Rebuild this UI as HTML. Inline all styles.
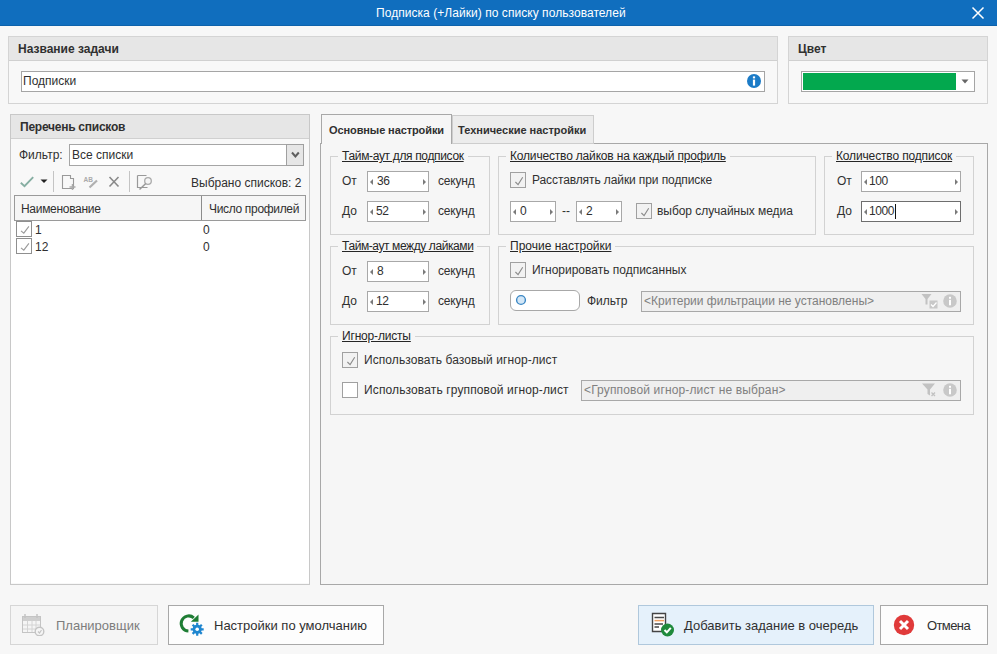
<!DOCTYPE html>
<html><head><meta charset="utf-8">
<style>
*{box-sizing:border-box;margin:0;padding:0}
html,body{width:997px;height:654px;overflow:hidden;background:#f7f7f7;font-family:"Liberation Sans",sans-serif;font-size:12px;color:#303030}
.a{position:absolute}
.t{position:absolute;line-height:14px;white-space:nowrap}
.b{font-weight:bold}
.panel{position:absolute;border:1px solid #d4d4d4;background:#f8f8f8}
.ph{position:absolute;left:0;right:0;top:0;height:24px;background:#e6e6e6;border-bottom:1px solid #d0d0d0}
.inp{position:absolute;background:#fff;border:1px solid #a5a5a5}
.grp{position:absolute;border:1px solid #d2d2d2}
.gt{position:absolute;line-height:14px;white-space:nowrap;background:#f6f6f6;padding:0 4px;text-decoration:underline;color:#262626}
.spin{position:absolute;background:#fff;border:1px solid #a8a8a8;height:21px}
.spin .l{position:absolute;left:2px;top:7px;width:0;height:0;border-top:3px solid transparent;border-bottom:3px solid transparent;border-right:3px solid #7a7a7a}
.spin .r{position:absolute;right:2px;top:7px;width:0;height:0;border-top:3px solid transparent;border-bottom:3px solid transparent;border-left:3px solid #7a7a7a}
.spin .v{position:absolute;left:9px;top:2px;line-height:14px;letter-spacing:-0.4px}
.cb{position:absolute;width:16px;height:16px;border:1px solid #a0a0a0;background:#f2f2f2}
.cb svg{position:absolute;left:0;top:0}
.btn{position:absolute;border:1px solid #adadad;background:#fdfdfd;height:40px}
.bt{position:absolute;line-height:14px;white-space:nowrap;font-size:13px}
</style></head>
<body>
<!-- title bar -->
<div class="a" style="left:0;top:0;width:997px;height:26px;background:#106ebe;border-bottom:1px solid #0d62ab"></div>
<div class="t" style="left:376px;top:6px;color:#fff;letter-spacing:0.05px">Подписка (+Лайки) по списку пользователей</div>
<svg class="a" style="left:971px;top:6px" width="14" height="14" viewBox="0 0 14 14"><path d="M1.5 1.5L12.5 12.5M12.5 1.5L1.5 12.5" stroke="#fff" stroke-width="1.5"/></svg>

<!-- panel name -->
<div class="panel" style="left:8px;top:36px;width:770px;height:68px"><div class="ph"></div></div>
<div class="t b" style="left:18px;top:42px">Название задачи</div>
<div class="inp" style="left:21px;top:71px;width:744px;height:21px"></div>
<div class="t" style="left:23px;top:74px">Подписки</div>
<svg class="a" style="left:746px;top:73px" width="16" height="16" viewBox="0 0 16 16"><circle cx="8" cy="8" r="7" fill="#1b7bc7"/><rect x="6.9" y="3.4" width="2.2" height="2" fill="#fff"/><rect x="6.9" y="6.6" width="2.2" height="6" fill="#fff"/></svg>

<!-- panel color -->
<div class="panel" style="left:788px;top:36px;width:200px;height:68px"><div class="ph"></div></div>
<div class="t b" style="left:798px;top:42px">Цвет</div>
<div class="inp" style="left:801px;top:71px;width:174px;height:21px"></div>
<div class="a" style="left:803px;top:73px;width:153px;height:17px;background:#03a84e"></div>
<svg class="a" style="left:961px;top:79px" width="8" height="5" viewBox="0 0 8 5"><path d="M0.5 0.5H7.5L4 4.5Z" fill="#666"/></svg>

<!-- panel lists -->
<div class="panel" style="left:10px;top:114px;width:300px;height:471px;border-color:#c8c8c8"><div class="ph"></div></div>
<div class="t b" style="left:20px;top:120px;letter-spacing:-0.25px">Перечень списков</div>
<div class="t" style="left:19px;top:148px">Фильтр:</div>
<div class="inp" style="left:69px;top:144px;width:235px;height:22px"></div>
<div class="a" style="left:286px;top:144px;width:18px;height:22px;background:#e6e6e6;border:1px solid #a0a0a0"></div>
<svg class="a" style="left:290px;top:150px" width="10" height="9" viewBox="0 0 10 9"><path d="M2 2.5L5.4 6.4L8.8 2.5" fill="none" stroke="#5e5e5e" stroke-width="2"/></svg>
<div class="t" style="left:72px;top:148px">Все списки</div>

<!-- toolbar -->
<svg class="a" style="left:18px;top:174px" width="18" height="15" viewBox="0 0 18 15"><path d="M2.8 8.8L6.5 12.2L15.2 3.2" fill="none" stroke="#86aea2" stroke-width="1.9"/></svg>
<svg class="a" style="left:40px;top:179px" width="8" height="5" viewBox="0 0 8 5"><path d="M0.5 0.5H7.5L4 4Z" fill="#222"/></svg>
<div class="a" style="left:53px;top:171px;width:1px;height:21px;background:#c4c4c4"></div>
<svg class="a" style="left:60px;top:173px" width="18" height="18" viewBox="0 0 18 18"><path d="M2.5 2.5H10.5V5.5H13.5V15.5H2.5Z" fill="none" stroke="#999" stroke-width="1.1"/><path d="M12.5 11V17M9.5 14H15.5" stroke="#aaa" stroke-width="1.5"/></svg>
<svg class="a" style="left:82px;top:174px" width="18" height="16" viewBox="0 0 18 16"><text x="1.5" y="7.5" font-family="Liberation Sans" font-size="6.5" font-weight="bold" fill="#aaa">AB</text><path d="M7.5 13.5L15 6.5" stroke="#b0b0b0" stroke-width="2.2"/></svg>
<svg class="a" style="left:107px;top:175px" width="14" height="14" viewBox="0 0 14 14"><path d="M2.5 2L11.5 11.5M11.5 2L2.5 11.5" stroke="#8a8a8a" stroke-width="1.6"/></svg>
<div class="a" style="left:129px;top:171px;width:1px;height:21px;background:#c4c4c4"></div>
<svg class="a" style="left:135px;top:173px" width="18" height="18" viewBox="0 0 18 18"><path d="M2.5 2.5H11.5M2.5 2.5V14.5H12.5" fill="none" stroke="#999" stroke-width="1.2"/><circle cx="13" cy="8" r="3.3" fill="#f5f5f5" stroke="#aaa" stroke-width="1.3"/><path d="M10.8 10.5L4.5 16.5" stroke="#999" stroke-width="1.5"/></svg>
<div class="t" style="left:191px;top:176px">Выбрано списков: 2</div>

<!-- grid -->
<div class="a" style="left:11px;top:220px;width:298px;height:363px;background:#fff"></div>
<div class="a" style="left:14px;top:195px;width:292px;height:26px;border:1px solid #9a9a9a;background:#f6f6f6"></div>
<div class="a" style="left:201px;top:196px;width:1px;height:24px;background:#8c8c8c"></div>
<div class="t" style="left:21px;top:202px;letter-spacing:-0.3px">Наименование</div>
<div class="t" style="left:209px;top:202px;letter-spacing:-0.33px">Число профилей</div>
<div class="cb" style="left:16px;top:221px;background:#fff;border-color:#8f8f8f"><svg width="16" height="16" viewBox="0 0 16 16"><path d="M4 8.8L6.8 11.2L11.9 4.3" fill="none" stroke="#9a9a9a" stroke-width="1.1"/></svg></div>
<div class="cb" style="left:16px;top:238px;background:#fff;border-color:#8f8f8f"><svg width="16" height="16" viewBox="0 0 16 16"><path d="M4 8.8L6.8 11.2L11.9 4.3" fill="none" stroke="#9a9a9a" stroke-width="1.1"/></svg></div>
<div class="t" style="left:35px;top:223px">1</div>
<div class="t" style="left:35px;top:240px">12</div>
<div class="t" style="left:203px;top:223px">0</div>
<div class="t" style="left:203px;top:240px">0</div>

<!-- tabs -->
<div class="a" style="left:320px;top:143px;width:668px;height:442px;border:1px solid #a8a8a8;background:#f6f6f6"></div>
<div class="a" style="left:452px;top:115px;width:142px;height:29px;border:1px solid #cdcdcd;background:#ececec"></div>
<div class="a" style="left:321px;top:114px;width:131px;height:30px;border:1px solid #a8a8a8;border-bottom:none;background:#f6f6f6"></div>
<div class="t b" style="left:329px;top:123px;font-size:11px;letter-spacing:-0.1px">Основные настройки</div>
<div class="t b" style="left:458px;top:123px;font-size:11px">Технические настройки</div>

<!-- groups -->
<div class="grp" style="left:330px;top:156px;width:160px;height:79px"></div>
<div class="gt" style="left:338px;top:149px;letter-spacing:-0.34px">Тайм-аут для подписок</div>
<div class="t" style="left:342px;top:174px">От</div>
<div class="spin" style="left:367px;top:171px;width:62px"><i class="l"></i><span class="v">36</span><i class="r"></i></div>
<div class="t" style="left:438px;top:174px;letter-spacing:-0.2px">секунд</div>
<div class="t" style="left:342px;top:204px">До</div>
<div class="spin" style="left:367px;top:201px;width:62px"><i class="l"></i><span class="v" style="left:8px">52</span><i class="r"></i></div>
<div class="t" style="left:438px;top:204px;letter-spacing:-0.2px">секунд</div>

<div class="grp" style="left:498px;top:156px;width:318px;height:79px"></div>
<div class="gt" style="left:506px;top:149px;letter-spacing:-0.18px">Количество лайков на каждый профиль</div>
<div class="cb" style="left:510px;top:172px"><svg width="16" height="16" viewBox="0 0 16 16"><path d="M4.4 9L7.1 11.6L11.7 4.3" fill="none" stroke="#8a8a8a" stroke-width="1.1"/></svg></div>
<div class="t" style="left:532px;top:173px;letter-spacing:-0.1px">Расставлять лайки при подписке</div>
<div class="spin" style="left:510px;top:201px;width:46px"><i class="l"></i><span class="v">0</span><i class="r"></i></div>
<div class="t" style="left:562px;top:204px">--</div>
<div class="spin" style="left:576px;top:201px;width:46px"><i class="l"></i><span class="v">2</span><i class="r"></i></div>
<div class="cb" style="left:636px;top:203px"><svg width="16" height="16" viewBox="0 0 16 16"><path d="M4.4 9L7.1 11.6L11.7 4.3" fill="none" stroke="#8a8a8a" stroke-width="1.1"/></svg></div>
<div class="t" style="left:657px;top:204px;letter-spacing:-0.05px">выбор случайных медиа</div>

<div class="grp" style="left:824px;top:156px;width:150px;height:79px"></div>
<div class="gt" style="left:832px;top:149px;letter-spacing:-0.15px">Количество подписок</div>
<div class="t" style="left:837px;top:174px">От</div>
<div class="spin" style="left:861px;top:171px;width:100px"><i class="l"></i><span class="v" style="left:7px">100</span><i class="r"></i></div>
<div class="t" style="left:837px;top:204px">До</div>
<div class="spin" style="left:861px;top:201px;width:100px;border-color:#6e6e6e"><i class="l"></i><span class="v" style="left:7px">1000</span><i class="r"></i></div>
<div class="a" style="left:895px;top:204px;width:1px;height:15px;background:#111"></div>

<div class="grp" style="left:330px;top:246px;width:160px;height:79px"></div>
<div class="gt" style="left:338px;top:239px;letter-spacing:-0.41px">Тайм-аут между лайками</div>
<div class="t" style="left:342px;top:264px">От</div>
<div class="spin" style="left:367px;top:261px;width:62px"><i class="l"></i><span class="v">8</span><i class="r"></i></div>
<div class="t" style="left:438px;top:264px;letter-spacing:-0.2px">секунд</div>
<div class="t" style="left:342px;top:294px">До</div>
<div class="spin" style="left:367px;top:291px;width:62px"><i class="l"></i><span class="v" style="left:8px">12</span><i class="r"></i></div>
<div class="t" style="left:438px;top:294px;letter-spacing:-0.2px">секунд</div>

<div class="grp" style="left:498px;top:246px;width:476px;height:79px"></div>
<div class="gt" style="left:506px;top:239px">Прочие настройки</div>
<div class="cb" style="left:510px;top:262px"><svg width="16" height="16" viewBox="0 0 16 16"><path d="M4.4 9L7.1 11.6L11.7 4.3" fill="none" stroke="#8a8a8a" stroke-width="1.1"/></svg></div>
<div class="t" style="left:532px;top:263px">Игнорировать подписанных</div>
<div class="a" style="left:510px;top:290px;width:70px;height:21px;border:1.5px solid #a8a8a8;border-radius:6px;background:#fff"></div>
<svg class="a" style="left:514px;top:293px" width="14" height="14" viewBox="0 0 14 14"><circle cx="7" cy="7" r="4.4" fill="#d3e7f7" stroke="#3b87c4" stroke-width="1.4"/></svg>
<div class="t" style="left:587px;top:294px">Фильтр</div>
<div class="a" style="left:641px;top:291px;width:320px;height:21px;border:1px solid #a8a8a8;background:#efefef"></div>
<div class="t" style="left:644px;top:294px;color:#808080">&lt;Критерии фильтрации не установлены&gt;</div>
<svg class="a" style="left:920px;top:293px" width="20" height="17" viewBox="0 0 20 17"><path d="M1.5 1H11.5L7.5 6V11.5L5.5 11.5V6Z" fill="#c2c2c2"/><rect x="9.5" y="7.5" width="8" height="8" fill="#c8c8c8"/><path d="M11 11.5L13 13.5L16.5 9.5" fill="none" stroke="#fff" stroke-width="1.2"/></svg>
<svg class="a" style="left:943px;top:294px" width="14" height="14" viewBox="0 0 14 14"><circle cx="7" cy="7" r="6.8" fill="#c8c8c8"/><rect x="6" y="2.8" width="2" height="2" fill="#fff"/><rect x="6" y="5.8" width="2" height="5.5" fill="#fff"/></svg>

<div class="grp" style="left:330px;top:336px;width:644px;height:79px"></div>
<div class="gt" style="left:338px;top:329px;letter-spacing:-0.18px">Игнор-листы</div>
<div class="cb" style="left:342px;top:352px"><svg width="16" height="16" viewBox="0 0 16 16"><path d="M4.4 9L7.1 11.6L11.7 4.3" fill="none" stroke="#8a8a8a" stroke-width="1.1"/></svg></div>
<div class="t" style="left:364px;top:353px;letter-spacing:0.07px">Использовать базовый игнор-лист</div>
<div class="cb" style="left:342px;top:382px;background:#fff"></div>
<div class="t" style="left:364px;top:383px;letter-spacing:0.13px">Использовать групповой игнор-лист</div>
<div class="a" style="left:581px;top:380px;width:380px;height:21px;border:1px solid #a8a8a8;background:#efefef"></div>
<div class="t" style="left:584px;top:383px;color:#808080;letter-spacing:0.14px">&lt;Групповой игнор-лист не выбран&gt;</div>
<svg class="a" style="left:920px;top:382px" width="20" height="17" viewBox="0 0 20 17"><path d="M2 1.5H15L10 7.5V13.5L7.5 12V7.5Z" fill="#c2c2c2"/><path d="M11.5 10.5L15 14M15 10.5L11.5 14" stroke="#c2c2c2" stroke-width="1.3"/></svg>
<svg class="a" style="left:943px;top:383px" width="14" height="14" viewBox="0 0 14 14"><circle cx="7" cy="7" r="6.8" fill="#c8c8c8"/><rect x="6" y="2.8" width="2" height="2" fill="#fff"/><rect x="6" y="5.8" width="2" height="5.5" fill="#fff"/></svg>

<!-- buttons -->
<div class="btn" style="left:10px;top:605px;width:148px;border-color:#d6d6d6;background:#f5f5f5"></div>
<svg class="a" style="left:21px;top:612px" width="24" height="24" viewBox="0 0 24 24"><rect x="1.5" y="4.5" width="18" height="16" fill="#f5f5f5" stroke="#c4c4c4"/><rect x="2" y="5" width="17" height="4" fill="#cfcfcf"/><path d="M4 2V6M16 2V6" stroke="#c4c4c4" stroke-width="1.5"/><path d="M2 13H19M2 17H19M6.5 9V20M11 9V20M15 9V20" stroke="#d4d4d4"/><circle cx="18.5" cy="19.5" r="4.3" fill="#f5f5f5" stroke="#c4c4c4" stroke-width="1.4"/><path d="M17 19.5L18.5 21L20.5 18" fill="none" stroke="#c4c4c4" stroke-width="1.2"/></svg>
<div class="bt" style="left:56px;top:619px;color:#7d7d7d">Планировщик</div>
<div class="btn" style="left:168px;top:605px;width:216px;border-color:#a8a8a8"></div>
<svg class="a" style="left:178px;top:612px" width="28" height="26" viewBox="0 0 28 26"><path d="M15.8 5.8A7.6 7.6 0 1 0 10.4 19.1" fill="none" stroke="#1e7d34" stroke-width="3"/><path d="M12.8 9.8H20.5V2.5Z" fill="#1e7d34"/><g transform="translate(19.2 17.3)"><circle r="4.6" fill="#1f86cf"/><path d="M0 -6.5V6.5M-6.5 0H6.5M-4.6 -4.6L4.6 4.6M4.6 -4.6L-4.6 4.6" stroke="#1f86cf" stroke-width="2.2"/><circle r="1.8" fill="#fff"/></g></svg>
<div class="bt" style="left:214px;top:619px">Настройки по умолчанию</div>
<div class="btn" style="left:638px;top:605px;width:236px;background:#e5f1fb;border-color:#b0c8dc"></div>
<svg class="a" style="left:648px;top:610px" width="28" height="28" viewBox="0 0 28 28"><path d="M4.5 3.5H17.5V21.5H4.5Z" fill="#fff" stroke="#444" stroke-width="1.4"/><path d="M6.5 7.6H16M6.5 14.1H15M6.5 17.1H11" stroke="#484848" stroke-width="1.5"/><path d="M6.5 10.6H16" stroke="#f0a060" stroke-width="1.5"/><circle cx="19.5" cy="20" r="6.5" fill="#1f8a3c"/><path d="M16.5 20L18.8 22.3L22.8 17.8" fill="none" stroke="#fff" stroke-width="2"/></svg>
<div class="bt" style="left:684px;top:619px">Добавить задание в очередь</div>
<div class="btn" style="left:880px;top:605px;width:108px;border-color:#a8a8a8"></div>
<svg class="a" style="left:893px;top:614px" width="22" height="22" viewBox="0 0 22 22"><circle cx="11" cy="11" r="10.2" fill="#e03a3a"/><path d="M7 7L15 15M15 7L7 15" stroke="#fff" stroke-width="3"/></svg>
<div class="bt" style="left:927px;top:619px;letter-spacing:-0.6px">Отмена</div>
</body></html>
